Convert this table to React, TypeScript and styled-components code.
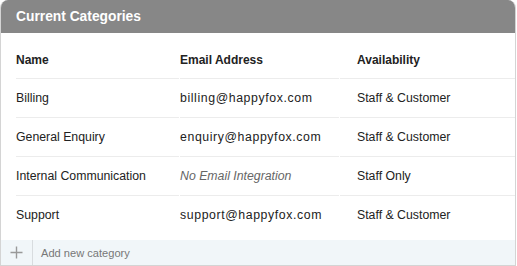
import styled, { createGlobalStyle } from "styled-components";

const Global = createGlobalStyle`
  html, body {
    margin: 0;
    padding: 0;
    background: #ffffff;
  }
  body {
    font-family: "Liberation Sans", Arial, Helvetica, sans-serif;
    color: #222;
  }
`;

const Panel = styled.div`
  width: 516px;
  height: 266px;
  box-sizing: border-box;
  border: 1px solid #d4d4d4;
  border-top: none;
  border-radius: 8px 8px 0 0;
  overflow: hidden;
  display: flex;
  flex-direction: column;
  background: #fff;
`;

const Header = styled.div`
  height: 33px;
  background: #878787;
  color: #fff;
  font-weight: bold;
  font-size: 13.8px;
  display: flex;
  align-items: center;
  padding-left: 16px;
  margin: 0 -1px;
  flex-shrink: 0;
`;

const Table = styled.div`
  display: grid;
  grid-template-columns: 163px 159px 176px;
  column-gap: 1px;
  margin-left: 15px;
  padding-bottom: 5px;
`;

const Cell = styled.div<{ $head?: boolean; $last?: boolean; $pad?: number }>`
  height: ${(p) => (p.$head ? 46 : 39)}px;
  box-sizing: border-box;
  display: flex;
  align-items: center;
  padding-left: ${(p) => p.$pad ?? 0}px;
  padding-top: ${(p) => (p.$head ? 8 : 0)}px;
  border-bottom: 1px solid ${(p) => (p.$last ? "transparent" : "#ececec")};
  font-size: ${(p) => (p.$head ? 12 : 12.3)}px;
  font-weight: ${(p) => (p.$head ? "bold" : "normal")};
  color: #222;
  white-space: nowrap;
`;

const Email = styled.span<{ $none?: boolean }>`
  font-style: ${(p) => (p.$none ? "italic" : "normal")};
  color: ${(p) => (p.$none ? "#666" : "#222")};
  letter-spacing: ${(p) => (p.$none ? "0" : "0.6px")};
  font-size: 12.3px;
`;

const Footer = styled.div`
  margin-top: auto;
  height: 25px;
  background: #f1f6f9;
  display: flex;
  align-items: stretch;
`;

const AddButton = styled.div`
  width: 31px;
  display: flex;
  align-items: center;
  justify-content: center;
  border-right: 1px solid #d8dcdf;
`;

const AddLabel = styled.div`
  display: flex;
  align-items: center;
  padding-left: 8px;
  font-size: 11.1px;
  color: #777;
`;

const rows = [
  { name: "Billing", email: "billing@happyfox.com", avail: "Staff & Customer" },
  { name: "General Enquiry", email: "enquiry@happyfox.com", avail: "Staff & Customer" },
  { name: "Internal Communication", email: "", avail: "Staff Only" },
  { name: "Support", email: "support@happyfox.com", avail: "Staff & Customer" },
];

export default function App() {
  return (
    <>
      <Global />
      <Panel>
        <Header>Current Categories</Header>
        <Table>
          <Cell $head>Name</Cell>
          <Cell $head>Email Address</Cell>
          <Cell $head $pad={17}>Availability</Cell>
          {rows.map((r, i) => {
            const last = i === rows.length - 1;
            return [
              <Cell key={`n${i}`} $last={last}>{r.name}</Cell>,
              <Cell key={`e${i}`} $last={last}>
                {r.email ? <Email>{r.email}</Email> : <Email $none>No Email Integration</Email>}
              </Cell>,
              <Cell key={`a${i}`} $last={last} $pad={17}>{r.avail}</Cell>,
            ];
          })}
        </Table>
        <Footer>
          <AddButton>
            <svg width="13" height="13" viewBox="0 0 13 13">
              <path d="M6.5 0.5v12M0.5 6.5h12" stroke="#999" strokeWidth="1.4" fill="none" />
            </svg>
          </AddButton>
          <AddLabel>Add new category</AddLabel>
        </Footer>
      </Panel>
    </>
  );
}
